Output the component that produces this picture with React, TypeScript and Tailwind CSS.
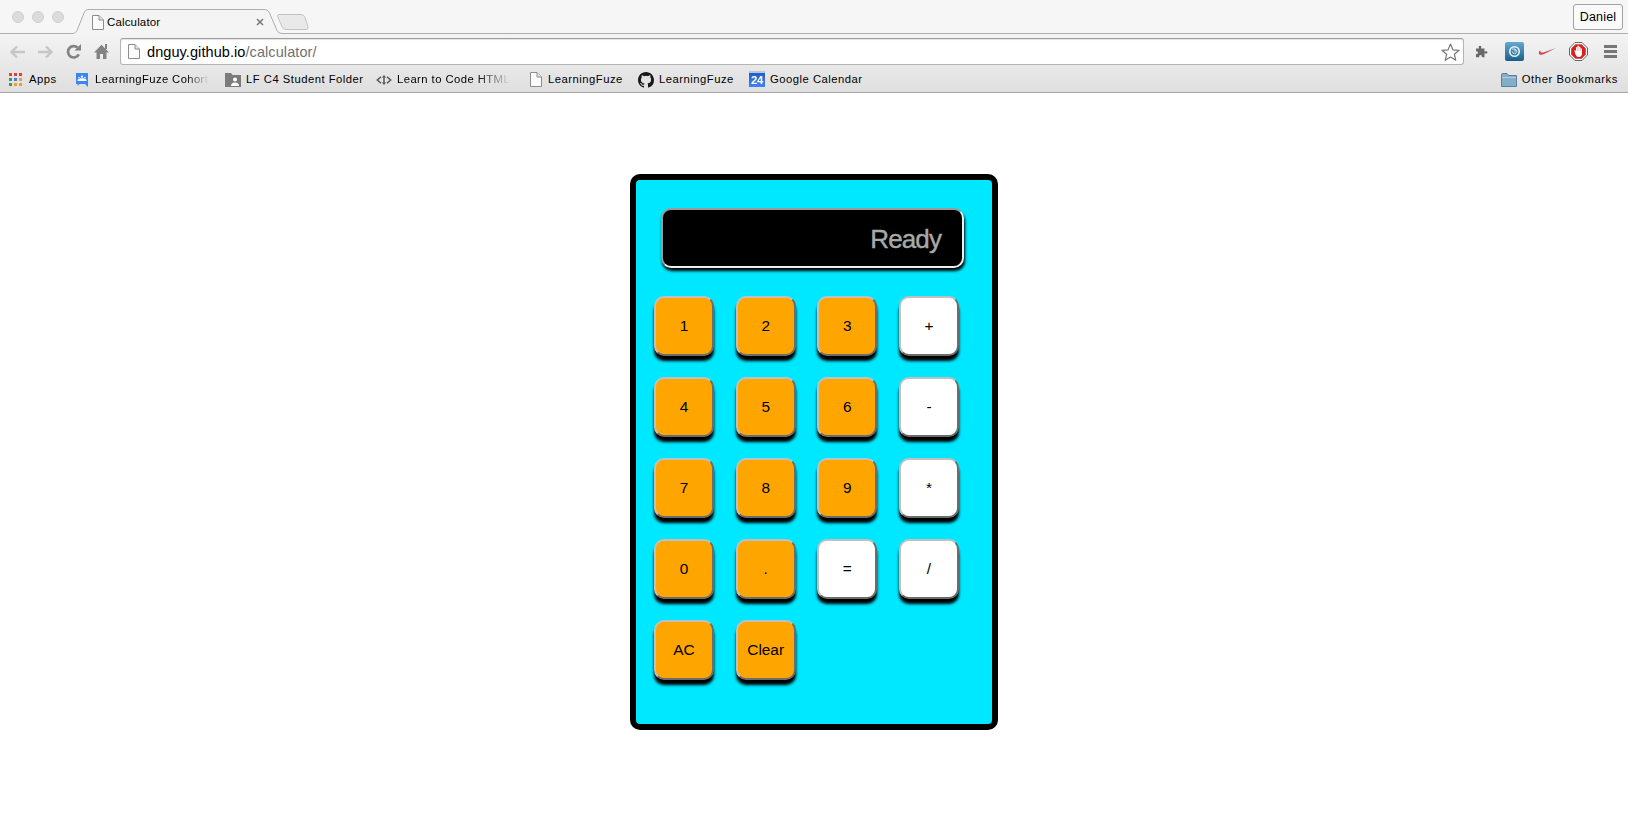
import React from "react";

const NUM = "bg-[#ffa500]";
const OP = "bg-white";

const keys: [string, string][] = [
  ["1", NUM], ["2", NUM], ["3", NUM], ["+", OP],
  ["4", NUM], ["5", NUM], ["6", NUM], ["-", OP],
  ["7", NUM], ["8", NUM], ["9", NUM], ["*", OP],
  ["0", NUM], [".", NUM], ["=", OP], ["/", OP],
  ["AC", NUM], ["Clear", NUM],
];

function PageIcon({ className = "" }: { className?: string }) {
  return (
    <svg className={className} width="12" height="15" viewBox="0 0 12 15">
      <path d="M.5.5h6.5l4.500 4.500v9.500H.5z" fill="#fbfbfb" stroke="#8c8c8c" />
      <path d="M7 .5v4.500h4.500" fill="#e4e4e4" stroke="#8c8c8c" />
    </svg>
  );
}

function TabStrip() {
  return (
    <div className="relative flex h-[34px] border-b border-[#adadad] bg-[#f6f6f6]">
      <div className="ml-3 mt-[11px] flex gap-2">
        <i className="size-3 rounded-full border border-[#cfcfcf] bg-[#dcdcdc]" />
        <i className="size-3 rounded-full border border-[#cfcfcf] bg-[#dcdcdc]" />
        <i className="size-3 rounded-full border border-[#cfcfcf] bg-[#dcdcdc]" />
      </div>
      <svg className="absolute left-[72px] top-[9px]" width="240" height="26" viewBox="0 0 240 26">
        <path d="M0 24.500C4 24.500 5 22 6 19L12 4C13 1.500 14 .5 17 .5H191C195 .5 196 1 197.500 4L204 19C205 22 206 24.500 211 24.500V26H0z" fill="#f4f4f4" />
        <path d="M0 24.500C4 24.500 5 22 6 19L12 4C13 1.500 14 .5 17 .5H191C195 .5 196 1 197.500 4L204 19C205 22 206 24.500 211 24.500" fill="none" stroke="#adadad" />
        <path d="M207 5.500h22q3 0 4 3l3 9q.7 3-2 3h-20q-3 0-4-3l-4-9q-1-3 1-3z" fill="#e9e9e9" stroke="#c2c2c2" />
      </svg>
      <div className="relative ml-[28px] mt-[14px] flex h-4 w-[172px] items-center">
        <PageIcon />
        <span className="ml-[3px] text-[11.500px] leading-4 tracking-[0.15px]">Calculator</span>
        <svg className="ml-auto" width="8" height="8" viewBox="0 0 8 8">
          <path d="M1 1l6 6M7 1l-6 6" stroke="#777" strokeWidth="1.500" />
        </svg>
      </div>
      <div className="ml-auto mr-[5px] mt-1 flex h-[26px] w-[50px] items-center justify-center rounded-[3px] border border-[#a2a2a2] bg-[#fafafa] text-[12.500px] tracking-[0.15px]">
        Daniel
      </div>
    </div>
  );
}

function Toolbar() {
  return (
    <div className="flex h-[34px] items-center pt-px">
      <svg className="ml-[10px]" width="15" height="14" viewBox="0 0 15 14">
        <path d="M15 7H2M7 1.500L1.500 7L7 12.500" fill="none" stroke="#c6c6c6" strokeWidth="2.400" />
      </svg>
      <svg className="ml-[13px]" width="15" height="14" viewBox="0 0 15 14">
        <path d="M0 7H13M8 1.500L13.500 7L8 12.500" fill="none" stroke="#c6c6c6" strokeWidth="2.400" />
      </svg>
      <svg className="ml-[13px]" width="15" height="15" viewBox="0 0 15 15">
        <path d="M12.800 10.400A5.700 5.700 0 1 1 11.500 3.500" fill="none" stroke="#838383" strokeWidth="2.700" />
        <path d="M15 0v6.500H8.500z" fill="#838383" />
      </svg>
      <svg className="ml-[13px]" width="15" height="15" viewBox="0 0 15 15">
        <path d="M7.500.8L15 8.500H12.500V15H9V10H6V15H2.500V8.500H0zM11 0h2v5h-2z" fill="#838383" />
      </svg>
      <div className="ml-[11px] flex h-[27px] w-[1344px] items-center rounded-[3px] border border-[#b5b5b5] border-t-[#9f9f9f] bg-white pl-[7px] shadow-[inset_0_1px_1px_#e3e3e3]">
        <PageIcon />
        <span className="ml-[7px] text-[14.500px] leading-5 tracking-[0.08px]">
          dnguy.github.io<span className="text-[#717171]">/calculator/</span>
        </span>
        <svg className="ml-auto mr-[3px]" width="19" height="18" viewBox="0 0 19 18">
          <path d="M9.500 1l2.400 5.800 6.200.5-4.700 4 1.400 6-5.300-3.200-5.300 3.200 1.400-6-4.700-4 6.200-.5z" fill="#fff" stroke="#777" strokeWidth="1.200" strokeLinejoin="round" />
        </svg>
      </div>
      <svg className="ml-[11px]" width="13" height="13" viewBox="0 0 13 13">
        <path d="M1 3.500h3Q3 .8 5 .8t1 2.700h3.500v3q2.800-1 3 .8t-3 1v3.900H6.800q.4-2.200-1.300-2.200t-1.300 2.200H1V9q2 .3 2-1.300T1 6.400z" fill="#696969" />
      </svg>
      <svg className="ml-[17px]" width="19" height="19" viewBox="0 0 19 19">
        <defs><linearGradient id="sync" x2="0" y2="1"><stop stopColor="#67a9ce" /><stop offset="1" stopColor="#175f8b" /></linearGradient></defs>
        <rect width="19" height="19" rx="2" fill="url(#sync)" />
        <circle cx="9.500" cy="9.500" r="4.700" fill="none" stroke="#e8f3fa" strokeWidth="1.600" />
        <path d="M9.500 7.300a2.200 2.200 0 1 1-2.200 2.200M7 7h3v3" fill="none" stroke="#cfe4f1" />
      </svg>
      <svg className="ml-[14px]" width="18" height="9" viewBox="0 0 18 9">
        <path d="M2.500 3C-.5 5.500.5 9 5 7.500L18 1 6 5.300C3 6 1.800 5 2.500 3z" fill="#cc4a4e" />
      </svg>
      <svg className="ml-[13px]" width="19" height="19" viewBox="0 0 19 19">
        <path d="M6 .5h7L18.500 6v7L13 18.500H6L.5 13V6z" fill="#fff" stroke="#666" />
        <path d="M6.500 2.200h6l4.300 4.300v6l-4.300 4.300h-6l-4.300-4.300v-6z" fill="#d8201c" />
        <path d="M5.300 8.500q1-.8 1.700.5V5.500q.8-1 1.400 0V4q.9-1 1.500 0v.8q.9-.9 1.500.2v1.500q1-.7 1.500.2v5.500q-.4 2.800-3.400 2.800Q7.500 15 6.500 12.500z" fill="#fff" />
        <path d="M8.400 5.500V9M9.900 4.800V9M11.400 6V9" stroke="#e58a88" strokeWidth=".5" />
      </svg>
      <svg className="ml-4" width="13" height="13" viewBox="0 0 13 13">
        <path d="M0 1.500h13M0 6.500h13M0 11.500h13" stroke="#777" strokeWidth="2.800" />
      </svg>
    </div>
  );
}

const dots = ["#e33e3a", "#e33e3a", "#e33e3a", "#3c9a5f", "#3d82e0", "#eda02f", "#3c9a5f", "#eda02f", "#eda02f"];

function Bookmarks() {
  return (
    <div className="flex h-[23px] items-center whitespace-nowrap text-[11.250px] tracking-[0.5px]">
      <svg className="ml-[9px]" width="13" height="13" viewBox="0 0 13 13">
        {dots.map((c, i) => <rect key={i} x={(i % 3) * 5} y={Math.floor(i / 3) * 5} width="3" height="3" fill={c} />)}
      </svg>
      <span className="ml-[7px] w-[47px]">Apps</span>
      <svg width="12" height="14" viewBox="0 0 12 14">
        <path d="M1.500 11v2L4 11z" fill="#8d9196" />
        <path d="M0 0h12v14l-3-3H0z" fill="#3b86f7" />
        <path d="M1.500 8V7q0-1 1.500-1 .5-.6 1.500-.8h3q1 .2 1.500.8 1.500 0 1.500 1v1z" fill="#fff" />
        <circle cx="6" cy="3.700" r="1.100" fill="#fff" />
        <circle cx="3" cy="4.700" r=".8" fill="#fff" />
        <circle cx="9" cy="4.700" r=".8" fill="#fff" />
      </svg>
      <span className="ml-[7px] w-[114px] overflow-hidden tracking-[0.4px] [mask-image:linear-gradient(to_right,black_80%,transparent)]">LearningFuze Cohort</span>
      <svg className="ml-[16px]" width="16" height="14" viewBox="0 0 16 14">
        <path d="M0 0h6l1.500 2H16v12H0z" fill="#7b7b7b" />
        <circle cx="10" cy="6.500" r="2" fill="#fff" /><path d="M6 13q0-3.500 4-3.500t4 3.500z" fill="#fff" />
      </svg>
      <span className="ml-[5px] w-[118px]">LF C4 Student Folder</span>
      <svg className="ml-[12px]" width="16" height="10" viewBox="0 0 16 10">
        <path d="M5 1.800L1.300 5 5 8.200M11 1.800L14.700 5 11 8.200M8 2v6" fill="none" stroke="#4b505c" strokeWidth="1.400" />
        <path d="M8 0l2 2.500H6zM8 10l2-2.500H6z" fill="#4b505c" />
      </svg>
      <span className="ml-[5px] w-[114px] overflow-hidden tracking-[0.45px] [mask-image:linear-gradient(to_right,black_70%,transparent)]">Learn to Code HTML</span>
      <PageIcon className="ml-[19px]" />
      <span className="ml-[6px] w-[75px]">LearningFuze</span>
      <svg className="ml-[15px]" width="16" height="16" viewBox="0 0 16 16">
        <path fill="#191919" d="M8 0C3.580 0 0 3.580 0 8c0 3.540 2.290 6.530 5.470 7.590.4.070.55-.17.55-.38 0-.19-.01-.82-.01-1.490-2.010.37-2.530-.49-2.690-.94-.09-.23-.48-.94-.82-1.130-.28-.15-.68-.52-.01-.53.63-.01 1.080.58 1.230.82.72 1.210 1.870.87 2.330.66.07-.52.28-.87.51-1.070-1.780-.2-3.640-.89-3.640-3.950 0-.87.31-1.590.82-2.150-.08-.2-.36-1.020.08-2.120 0 0 .67-.21 2.200.82a7.500 7.500 0 0 1 4 0c1.530-1.040 2.200-.82 2.200-.82.44 1.100.16 1.920.08 2.120.51.56.82 1.270.82 2.150 0 3.070-1.870 3.750-3.650 3.950.29.25.54.73.54 1.480 0 1.070-.01 1.930-.01 2.200 0 .21.15.46.55.38A8 8 0 0 0 16 8c0-4.420-3.580-8-8-8z" />
      </svg>
      <span className="ml-[5px] w-[75px]">LearningFuze</span>
      <span className="mb-px ml-[15px] flex h-4 w-4 items-center justify-center border-t-2 border-t-[#bcc5d1] bg-linear-to-b from-[#1f5fcb] to-[#3f83f0] text-[11px] font-bold leading-none tracking-normal text-white">24</span>
      <span className="ml-[5px]">Google Calendar</span>
      <svg className="ml-auto" width="16" height="14" viewBox="0 0 16 14">
        <path d="M.5 1.500q0-1 1-1h4.500l1.500 2h8v11H.5z" fill="#83adc9" stroke="#5b829d" />
        <path d="M1 4.500h14" stroke="#b5d0e2" />
      </svg>
      <span className="ml-[5px] mr-[10px] tracking-[0.58px]">Other Bookmarks</span>
    </div>
  );
}

export default function App() {
  return (
    <div className="flex h-[826px] w-[1628px] flex-col overflow-hidden bg-white font-['Liberation_Sans',Arial,sans-serif] text-black">
      <header className="h-[93px] shrink-0 border-b border-[#a6a6a6] bg-linear-to-b from-[#f4f4f4] from-35% to-[#dfdfdf]">
        <TabStrip />
        <Toolbar />
        <Bookmarks />
      </header>
      <main className="flex flex-1 justify-center pt-[81px]">
        <section className="h-[556px] w-[368px] rounded-[10px] border-6 border-black bg-[#00e8ff] pl-[18px] pt-7">
          <div className="ml-[7px] h-[60px] w-[303px] rounded-[10px] border-2 border-t-[#9a9a9a] border-r-[#eeeeee] border-b-[#eeeeee] border-l-[#9a9a9a] bg-black pr-[21px] text-right text-[26px] leading-[58px] tracking-[-0.9px] text-[#a9a9a9] shadow-[1px_3px_3px_black] [-webkit-text-stroke:0.4px_#a9a9a9]">
            Ready
          </div>
          <div className="mt-7 grid grid-cols-[repeat(4,60px)] gap-x-[21.67px] gap-y-[21px]">
            {keys.map(([label, tone]) => (
              <button
                key={label}
                className={`${tone} size-[60px] rounded-[10px] border-2 border-t-[#c0c0c0] border-r-[#6c6c6c] border-b-[#6c6c6c] border-l-[#c0c0c0] pb-px text-[15.400px] shadow-[0_5px_3px_black]`}
              >
                {label}
              </button>
            ))}
          </div>
        </section>
      </main>
    </div>
  );
}
